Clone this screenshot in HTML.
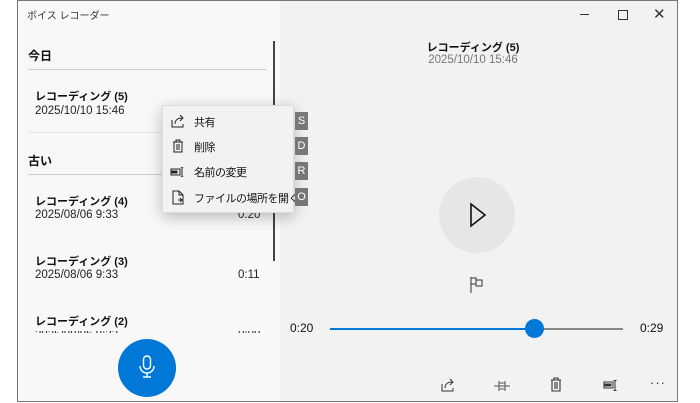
<!DOCTYPE html>
<html><head><meta charset="utf-8"><style>
*{margin:0;padding:0;box-sizing:border-box}
body{width:700px;height:403px;background:#fff;position:relative;overflow:hidden;font-family:"Liberation Sans","Noto Sans CJK JP",sans-serif;color:#111}
.win{position:absolute;left:17px;top:0;width:661px;height:402px;border:1px solid #777;background:#f2f2f2;overflow:hidden}
.left{position:absolute;left:0;top:0;width:262px;height:402px;background:#f8f8f8}
.a{position:absolute;white-space:nowrap}
.hd{font-size:12px;font-weight:bold}
.t{font-size:11px;font-weight:bold}
.d{font-size:11.5px;color:#222}
.line{position:absolute;height:1px;background:#ccc}
.menu{position:absolute;left:144px;top:104px;width:132px;height:108px;background:#f2f2f2;border:1px solid #ddd;box-shadow:0 4px 14px rgba(0,0,0,.25)}
.menu .a{font-size:11px;left:31px;letter-spacing:-0.5px}
.k{position:absolute;left:277px;width:13px;height:18px;background:#777;color:#fff;font-size:11px;text-align:center;line-height:18px}
</style></head><body>
<div class="win">
<div class="left"></div>
<div class="a" style="left:9px;top:6px;font-size:10px;color:#333">ボイス レコーダー</div>
<div style="position:absolute;left:562px;top:13px;width:9px;height:1.3px;background:#333"></div>
<div style="position:absolute;left:600px;top:9px;width:10px;height:10px;border:1.3px solid #333"></div>
<div class="a" style="left:635px;top:4px;font-size:15px;color:#333">✕</div>
<div style="position:absolute;left:255px;top:40px;width:1.5px;height:220px;background:#444"></div>
<div class="a hd" style="left:10px;top:46px">今日</div>
<div class="line" style="left:10px;top:68px;width:238px"></div>
<div class="a t" style="left:17px;top:87px">レコーディング (5)</div>
<div class="a d" style="left:17px;top:104px">2025/10/10 15:46</div>
<div class="line" style="left:10px;top:131px;width:238px;background:#e4e4e4"></div>
<div class="a hd" style="left:10px;top:151px">古い</div>
<div class="line" style="left:10px;top:173px;width:238px"></div>
<div class="a t" style="left:17px;top:192px">レコーディング (4)</div>
<div class="a d" style="left:17px;top:208px">2025/08/06 9:33</div>
<div class="a d" style="left:220px;top:208px">0:20</div>
<div class="a t" style="left:17px;top:252px">レコーディング (3)</div>
<div class="a d" style="left:17px;top:268px">2025/08/06 9:33</div>
<div class="a d" style="left:220px;top:268px">0:11</div>
<div class="a t" style="left:17px;top:312px">レコーディング (2)</div>
<div style="position:absolute;left:17px;top:330px;width:240px;height:2px;overflow:hidden"><div class="a d" style="left:0;top:-2px">2025/08/06 9:33</div><div class="a d" style="left:203px;top:-2px">0:09</div></div>
<div style="position:absolute;left:100px;top:338px;width:58px;height:58px;border-radius:50%;background:#0078d7"></div>
<svg style="position:absolute;left:119px;top:354px" width="20" height="26" viewBox="0 0 20 26" fill="none" stroke="#fff" stroke-width="1.4"><rect x="6.5" y="1" width="7" height="13" rx="3.5"/><path d="M3 11a7 7 0 0 0 14 0M10 18v4M6 22h8"/></svg>
<div class="menu">
<svg class="a" style="left:8px;top:8px" width="14" height="14" viewBox="0 0 14 14" fill="none" stroke="#222" stroke-width="1"><path d="M1 6v7h11v-3M4 10c0-4 3-6 7-6M9 1l3 3-3 3"/></svg>
<div class="a" style="top:8px">共有</div>
<svg class="a" style="left:9px;top:33px" width="12" height="14" viewBox="0 0 12 14" fill="none" stroke="#222" stroke-width="1"><path d="M1 3h10M4 3V1h4v2M2 3v10h8V3M5 5v6M7 5v6"/></svg>
<div class="a" style="top:33px">削除</div>
<svg class="a" style="left:7px;top:61px" width="16" height="10" viewBox="0 0 16 10" fill="none" stroke="#222" stroke-width="1"><path d="M1 2h9v6H1zM12 0v10M10.5 0h3M10.5 10h3"/><rect x="2" y="4" width="5" height="2" fill="#222"/></svg>
<div class="a" style="top:58px">名前の変更</div>
<svg class="a" style="left:9px;top:84px" width="12" height="15" viewBox="0 0 12 15" fill="none" stroke="#222" stroke-width="1"><path d="M1 1h6l4 4v9H1zM7 1v4h4M6 10h4M8 8l2 2-2 2"/></svg>
<div class="a" style="top:84px">ファイルの場所を開く</div>
</div>
<div class="k" style="top:111px">S</div>
<div class="k" style="top:136px">D</div>
<div class="k" style="top:161px">R</div>
<div class="k" style="top:187px">O</div>
<div class="a t" style="left:395px;top:38px;width:120px;text-align:center">レコーディング (5)</div>
<div class="a" style="left:395px;top:53px;width:120px;text-align:center;font-size:11.5px;color:#777">2025/10/10 15:46</div>
<div style="position:absolute;left:421px;top:176px;width:76px;height:76px;border-radius:50%;background:#e6e6e6"></div>
<svg style="position:absolute;left:451px;top:201px" width="18" height="26" viewBox="0 0 18 26" fill="none" stroke="#111" stroke-width="1.6"><path d="M2 2v22l14-11z"/></svg>
<svg style="position:absolute;left:451px;top:275px" width="16" height="18" viewBox="0 0 16 18" fill="none" stroke="#333" stroke-width="1"><path d="M2 1v16M2 2h5v6H2M7 4h6v6H7V8"/></svg>
<div class="a" style="left:272px;top:320px;font-size:12px">0:20</div>
<div class="a" style="left:622px;top:320px;font-size:12px">0:29</div>
<div style="position:absolute;left:312px;top:327px;width:205px;height:2px;background:#0078d7"></div>
<div style="position:absolute;left:517px;top:327px;width:88px;height:1.5px;background:#888"></div>
<div style="position:absolute;left:507px;top:318px;width:19px;height:19px;border-radius:50%;background:#0078d7"></div>
<svg style="position:absolute;left:423px;top:377px" width="14" height="14" viewBox="0 0 14 14" fill="none" stroke="#333" stroke-width="1"><path d="M1 6v7h11v-3M4 10c0-4 3-6 7-6M9 1l3 3-3 3"/></svg>
<svg style="position:absolute;left:476px;top:379px" width="16" height="12" viewBox="0 0 16 12" fill="none" stroke="#555" stroke-width="1"><path d="M0 6h16M5 1v10M11 1v10M5 3h6v6H5"/></svg>
<svg style="position:absolute;left:532px;top:376px" width="12" height="15" viewBox="0 0 12 15" fill="none" stroke="#333" stroke-width="1.1"><path d="M1 3h10M4 3V1h4v2M2 3v11h8V3M5 5v7M7 5v7"/></svg>
<svg style="position:absolute;left:585px;top:379px" width="16" height="11" viewBox="0 0 16 11" fill="none" stroke="#333" stroke-width="1"><path d="M1 2h9v6H1zM12 0v11M10.5 0.5h3M10.5 10.5h3"/><rect x="2" y="4" width="6" height="2" fill="#333"/></svg>
<div class="a" style="left:632px;top:374px;font-size:13px;color:#333;letter-spacing:1px">···</div>
</div>
</body></html>
